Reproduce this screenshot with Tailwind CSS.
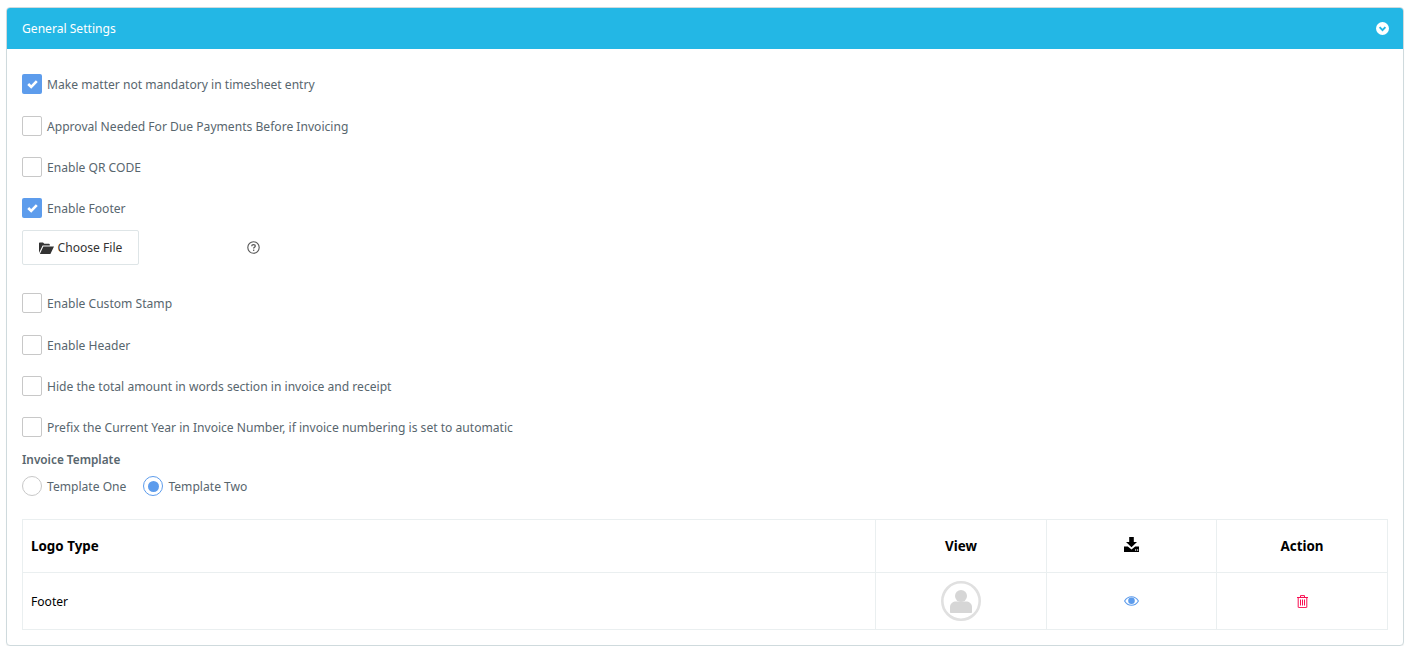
<!DOCTYPE html>
<html lang="en">
<head>
  <meta charset="UTF-8" />
  <title>General Settings</title>
  <script src="https://cdn.jsdelivr.net/npm/@tailwindcss/browser@4"></script>
</head>
<body class="bg-white font-['Noto_Sans',sans-serif] text-[12.1px] text-[#58666e]">

<div class="mx-[6px] mt-[7px] h-[639px] rounded-[4px] border border-[#cfdadd] bg-white shadow-[0_1px_1px_rgba(0,0,0,0.05)]">
  <div class="flex h-[41px] items-center justify-between rounded-t-[3px] bg-[#23b7e5] pl-[15px] pr-[14px] text-white">
    <span class="pt-[2px]">General Settings</span>
    <svg class="h-[13px] w-[13px]" viewBox="0 0 13 13">
      <circle cx="6.5" cy="6.5" r="6.5" fill="#fff" />
      <path d="M3.6 5.2 6.5 8.1 9.4 5.2" fill="none" stroke="#23b7e5" stroke-width="1.9" />
    </svg>
  </div>

  <div class="px-[15px]">
    <label class="mt-[25px] flex h-[20px] items-center gap-[5px]">
      <span class="flex h-[20px] w-[20px] items-center justify-center rounded-[2px] bg-[#5d9cec]">
        <svg class="h-[10px] w-[11px]" viewBox="0 0 11 10"><path d="M1.2 5 4.2 8 9.8 2.2" fill="none" stroke="#fff" stroke-width="2.6" /></svg>
      </span>
      <span class="pt-[2px]">Make matter not mandatory in timesheet entry</span>
    </label>
    <label class="mt-[22px] flex h-[20px] items-center gap-[5px]">
      <span class="h-[20px] w-[20px] rounded-[2px] border border-[#c8c8c8] bg-white"></span>
      <span class="pt-[2px]">Approval Needed For Due Payments Before Invoicing</span>
    </label>
    <label class="mt-[21px] flex h-[20px] items-center gap-[5px]">
      <span class="h-[20px] w-[20px] rounded-[2px] border border-[#c8c8c8] bg-white"></span>
      <span class="pt-[2px]">Enable QR CODE</span>
    </label>
    <label class="mt-[21px] flex h-[20px] items-center gap-[5px]">
      <span class="flex h-[20px] w-[20px] items-center justify-center rounded-[2px] bg-[#5d9cec]">
        <svg class="h-[10px] w-[11px]" viewBox="0 0 11 10"><path d="M1.2 5 4.2 8 9.8 2.2" fill="none" stroke="#fff" stroke-width="2.6" /></svg>
      </span>
      <span class="pt-[2px]">Enable Footer</span>
    </label>

    <div class="mt-[12px] flex items-center">
      <button class="flex h-[35px] w-[117px] items-center justify-center gap-[4px] rounded-[2px] border border-[#dee5e7] bg-white text-[#333]">
        <svg class="h-[12px] w-[15px]" viewBox="0 0 15 12"><path d="M0 11V1.4C0 .8.4.4 1 .4h3l1.3 1.3h4.6c.5 0 .9.4.9.9v1H3.6L0 11Zm.9 1h10.5L15 4.6H4.3L.9 12Z" fill="#333" /></svg>
        <span class="pt-[2px]">Choose File</span>
      </button>
      <svg class="ml-[108px] h-[13px] w-[13px]" viewBox="0 0 13 13">
        <circle cx="6.5" cy="6.5" r="5.7" fill="none" stroke="#555" stroke-width="1.1" />
        <path d="M4.7 5.2c0-1 .8-1.6 1.8-1.6s1.8.6 1.8 1.5c0 1.2-1.7 1.3-1.7 2.5" fill="none" stroke="#555" stroke-width="1.2" />
        <rect x="6" y="8.6" width="1.3" height="1.3" fill="#555" />
      </svg>
    </div>

    <label class="mt-[28px] flex h-[20px] items-center gap-[5px]">
      <span class="h-[20px] w-[20px] rounded-[2px] border border-[#c8c8c8] bg-white"></span>
      <span class="pt-[2px]">Enable Custom Stamp</span>
    </label>
    <label class="mt-[22px] flex h-[20px] items-center gap-[5px]">
      <span class="h-[20px] w-[20px] rounded-[2px] border border-[#c8c8c8] bg-white"></span>
      <span class="pt-[2px]">Enable Header</span>
    </label>
    <label class="mt-[21px] flex h-[20px] items-center gap-[5px]">
      <span class="h-[20px] w-[20px] rounded-[2px] border border-[#c8c8c8] bg-white"></span>
      <span class="pt-[2px]">Hide the total amount in words section in invoice and receipt</span>
    </label>
    <label class="mt-[21px] flex h-[20px] items-center gap-[5px]">
      <span class="h-[20px] w-[20px] rounded-[2px] border border-[#c8c8c8] bg-white"></span>
      <span class="pt-[2px]">Prefix the Current Year in Invoice Number, if invoice numbering is set to automatic</span>
    </label>

    <div class="mt-[13px] h-[18px] text-[11.8px] font-semibold leading-[18px]">Invoice Template</div>
    <div class="mt-[8px] flex h-[20px] items-center">
      <label class="flex items-center gap-[5px]">
        <span class="h-[20px] w-[20px] rounded-full border border-[#c8c8c8] bg-white"></span>
        <span class="pt-[2px]">Template One</span>
      </label>
      <label class="ml-[17px] flex items-center gap-[5px]">
        <span class="flex h-[20px] w-[20px] items-center justify-center rounded-full border border-[#5d9cec] bg-white">
          <span class="h-[11px] w-[11px] rounded-full bg-[#5d9cec]"></span>
        </span>
        <span class="pt-[2px]">Template Two</span>
      </label>
    </div>

    <table class="mt-[23px] w-[1366px] table-fixed border-collapse text-black">
      <thead>
        <tr class="h-[53px]">
          <th class="border border-[#eaeff0] px-[8px] text-left text-[13.4px] font-bold">Logo Type</th>
          <th class="w-[171px] border border-[#eaeff0] text-center text-[13.4px] font-bold">View</th>
          <th class="w-[170px] border border-[#eaeff0] text-center">
            <svg class="mx-auto mb-[3px] h-[15px] w-[15px]" viewBox="0 0 15 15">
              <path d="M5.2 0h4.6v5H13L7.5 10.2 2 5h3.2V0Z" fill="#000" />
              <path d="M0 9.5h3.8l3.7 3 3.7-3H15V15H0V9.5Z" fill="#000" />
              <rect x="11" y="12.4" width="1.2" height="1.2" fill="#fff" />
              <rect x="13" y="12.4" width="1.2" height="1.2" fill="#fff" />
            </svg>
          </th>
          <th class="w-[171px] border border-[#eaeff0] text-center text-[13.4px] font-bold">Action</th>
        </tr>
      </thead>
      <tbody>
        <tr class="h-[57px]">
          <td class="border border-[#eaeff0] px-[8px] pt-[2px]">Footer</td>
          <td class="border border-[#eaeff0]">
            <svg class="mx-auto h-[40px] w-[40px]" viewBox="0 0 40 40">
              <circle cx="20" cy="20" r="18.7" fill="#fff" stroke="#e0e0e0" stroke-width="2.6" />
              <circle cx="20" cy="15" r="6" fill="#d6d6d6" />
              <path d="M9 31v-5c0-3.5 3-5.5 6-5.5h10c3 0 6 2 6 5.5v5c0 .6-.4 1-1 1H10c-.6 0-1-.4-1-1Z" fill="#d6d6d6" />
            </svg>
          </td>
          <td class="border border-[#eaeff0]">
            <svg class="mx-auto h-[10px] w-[15px]" viewBox="0 0 15 10">
              <path d="M.6 5C2.2 2.2 4.6.7 7.5.7s5.3 1.5 6.9 4.3C12.8 7.8 10.4 9.3 7.5 9.3S2.2 7.8.6 5Z" fill="none" stroke="#5d9cec" stroke-width="1.1" />
              <circle cx="7.5" cy="4.8" r="3.3" fill="#5d9cec" />
            </svg>
          </td>
          <td class="border border-[#eaeff0]">
            <svg class="mx-auto h-[13px] w-[11px]" viewBox="0 0 11 13">
              <path d="M0 2.5h11M3.5 2.3V.6h4v1.7M1.2 2.5v9.7c0 .3.2.4.4.4h7.8c.2 0 .4-.1.4-.4V2.5" fill="none" stroke="#f80f52" stroke-width="1" />
              <path d="M3.5 4.5v6M5.5 4.5v6M7.5 4.5v6" fill="none" stroke="#f80f52" stroke-width="1" />
            </svg>
          </td>
        </tr>
      </tbody>
    </table>
  </div>
</div>

</body>
</html>
